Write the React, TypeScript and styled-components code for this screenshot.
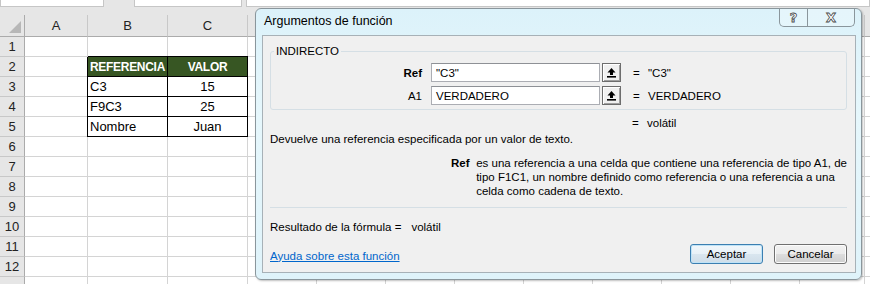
import { Fragment } from "react";
import styled, { createGlobalStyle } from "styled-components";

const GlobalStyle = createGlobalStyle`
  html, body {
    margin: 0;
    padding: 0;
    background: #ffffff;
    overflow: hidden;
  }
  * {
    box-sizing: border-box;
  }
`;

// only A..C headers show beside the dialog, the rest sit under it
const COLS = ["A", "B", "C", "", "", "", "", "", "", "", "", "", ""];
const WIDTHS = [63, 80, 80, 69, 69, 69, 69, 69, 69, 69, 69, 65, 64];

const table: Record<number, [string, string]> = {
  2: ["REFERENCIA", "VALOR"],
  3: ["C3", "15"],
  4: ["F9C3", "25"],
  5: ["Nombre", "Juan"],
};

const Screen = styled.div`
  position: relative;
  width: 870px;
  height: 284px;
  overflow: hidden;
  font-family: "Liberation Sans", Arial, sans-serif;
`;

const TopStrip = styled.div`
  height: 15px;
  background: #e6e6e6;
  display: flex;
  align-items: flex-start;
`;

const BarBox = styled.div<{ $w: number; $ml: number }>`
  width: ${({ $w }) => $w}px;
  margin-left: ${({ $ml }) => $ml}px;
  height: 7px;
  background: #ffffff;
  border: 1px solid #c6c6c6;
  border-top: none;
`;

const Grid = styled.div`
  display: grid;
  grid-template-columns: 25px ${WIDTHS.map((w) => `${w}px`).join(" ")};
  grid-template-rows: 22px repeat(13, 20px);
  font-size: 13px;
`;

const Corner = styled.div`
  background: #e6e6e6;
  border-right: 1px solid #ababab;
  border-bottom: 1px solid #ababab;
  position: relative;
  &::after {
    content: "";
    position: absolute;
    right: 3px;
    bottom: 3px;
    border-style: solid;
    border-width: 0 0 12px 12px;
    border-color: transparent transparent #b7b7b7 transparent;
  }
`;

const ColHead = styled.div`
  background: #e6e6e6;
  border-right: 1px solid #c8c8c8;
  border-bottom: 1px solid #ababab;
  display: flex;
  align-items: center;
  justify-content: center;
  color: #222;
  font-size: 13px;
`;

const RowHead = styled.div`
  background: #e6e6e6;
  border-right: 1px solid #ababab;
  border-bottom: 1px solid #c8c8c8;
  display: flex;
  align-items: center;
  justify-content: center;
  color: #222;
  font-size: 13px;
`;

const Cell = styled.div<{
  $boxed?: boolean;
  $head?: boolean;
  $center?: boolean;
  $left?: boolean;
  $top?: boolean;
}>`
  border-right: 1px solid ${({ $boxed }) => ($boxed ? "#000" : "#d4d4d4")};
  border-bottom: 1px solid ${({ $boxed }) => ($boxed ? "#000" : "#d4d4d4")};
  background: ${({ $head }) => ($head ? "#375623" : "#fff")};
  color: ${({ $head }) => ($head ? "#fff" : "#000")};
  font-weight: ${({ $head }) => ($head ? "bold" : "normal")};
  font-size: ${({ $head }) => ($head ? "12px" : "13px")};
  letter-spacing: ${({ $head }) => ($head ? "-0.3px" : "0")};
  display: flex;
  align-items: flex-end;
  padding: 0 2px 2px 2px;
  justify-content: ${({ $center }) => ($center ? "center" : "flex-start")};
  white-space: nowrap;
  overflow: hidden;
  box-shadow: ${({ $left, $top }) =>
    [$left ? "-1px 0 0 #000" : "", $top ? "0 -1px 0 #000" : ""]
      .filter(Boolean)
      .join(", ") || "none"};
`;

/* dialog window floating over the sheet */
const Dialog = styled.div`
  position: absolute;
  left: 255px;
  top: 8px;
  width: 607px;
  height: 272px;
  border: 1px solid #8a969c;
  border-radius: 6px;
  background: linear-gradient(180deg, #dcf2fa 0%, #e6f7fc 40%, #dff3fa 100%);
  box-shadow: 1px 1px 2px rgba(0, 0, 0, 0.25);
  display: flex;
  flex-direction: column;
  padding: 0 5px 6px 6px;
  font-family: "Liberation Sans", Arial, sans-serif;
`;

const TitleBar = styled.div`
  height: 26px;
  display: flex;
  align-items: flex-start;
  justify-content: space-between;
`;

const Title = styled.div`
  font-size: 12.5px;
  color: #000;
  padding: 5px 0 0 2px;
`;

const Caption = styled.div`
  display: flex;
  height: 18px;
  margin-right: 1px;
  border: 1px solid #8a969c;
  border-top: none;
  border-radius: 0 0 5px 5px;
  background: rgba(255, 255, 255, 0.25);
`;

const CapBtn = styled.div<{ $w: number; $sep?: boolean }>`
  width: ${({ $w }) => $w}px;
  display: flex;
  align-items: center;
  justify-content: center;
  border-right: ${({ $sep }) => ($sep ? "1px solid #8a969c" : "none")};
  font-family: "DejaVu Sans", sans-serif;
  font-weight: bold;
  font-size: 13px;
  color: #fff;
  -webkit-text-stroke: 0.8px #4a4a4a;
`;

const Body = styled.div`
  flex: 1;
  background: #f0f0f0;
  border: 1px solid #a7b1b7;
  padding: 8px 8px 0 7px;
  display: flex;
  flex-direction: column;
  font-size: 11.5px;
  color: #000;
`;

const Group = styled.fieldset`
  margin: 0;
  padding: 5px 0 4px 1px;
  border: 1px solid #d5dfe5;
  border-radius: 3px;
  display: flex;
  flex-direction: column;
  gap: 4px;
`;

const Legend = styled.legend`
  padding: 0 2px;
  margin-left: 2px;
  line-height: 14px;
  font-size: 11.5px;
`;

const ArgRow = styled.div<{ $indent?: number }>`
  display: grid;
  grid-template-columns: 159px 171px 19px 27px auto;
  height: 19px;
  align-items: center;
  margin-left: ${({ $indent }) => $indent ?? 0}px;
`;

const ArgLabel = styled.div<{ $bold?: boolean }>`
  text-align: right;
  margin-right: 9px;
  font-weight: ${({ $bold }) => ($bold ? "bold" : "normal")};
`;

const Field = styled.div`
  height: 19px;
  margin-right: 2px;
  background: #fff;
  border: 1px solid #abadb3;
  border-top-color: #8e9196;
  padding-left: 4px;
  display: flex;
  align-items: center;
  white-space: nowrap;
`;

const PickBtn = styled.div`
  width: 19px;
  height: 19px;
  background: #f0f0f0;
  border: 1px solid #6d6d6d;
  box-shadow: inset 1px 1px 0 #fff, inset -1px -1px 0 #a0a0a0;
  display: flex;
  align-items: center;
  justify-content: center;
`;

const Eq = styled.div`
  padding-left: 12px;
`;

const Val = styled.div`
  white-space: nowrap;
`;

const Line = styled.div<{ $mt: number }>`
  margin-top: ${({ $mt }) => $mt}px;
  line-height: 14px;
  white-space: nowrap;
`;

const ArgHelp = styled.div`
  margin-top: 10px;
  display: flex;
  line-height: 14px;
  padding-left: 181px;
`;

const HelpName = styled.div`
  font-weight: bold;
  width: 27px;
`;

const HelpText = styled.div`
  white-space: nowrap;
`;

const Separator = styled.div`
  margin-top: 9px;
  height: 1px;
  background: #d5dfe5;
`;

const ResultValue = styled.span`
  margin-left: 10px;
`;

const Footer = styled.div`
  margin-top: 10px;
  display: flex;
  align-items: center;
  justify-content: space-between;
`;

const HelpLink = styled.a`
  color: #0066cc;
  text-decoration: underline;
  padding-top: 3px;
`;

const Buttons = styled.div`
  display: flex;
  gap: 11px;
`;

const Button = styled.div<{ $default?: boolean }>`
  width: 73px;
  height: 20px;
  border-radius: 3px;
  border: 1px solid ${({ $default }) => ($default ? "#3c7fb1" : "#707070")};
  background: ${({ $default }) =>
    $default
      ? "linear-gradient(180deg, #f1f7fb 0%, #e8f1f7 50%, #d9e6ef 51%, #cfdde8 100%)"
      : "linear-gradient(180deg, #f2f2f2 0%, #ebebeb 50%, #dddddd 51%, #cfcfcf 100%)"};
  box-shadow: inset 0 0 0 1px
    ${({ $default }) => ($default ? "#bfe3f7" : "#fcfcfc")};
  display: flex;
  align-items: center;
  justify-content: center;
`;

const PickIcon = () => (
  <svg width="11" height="11" viewBox="0 0 11 11">
    <polygon points="5.5,1 1.5,5.5 9.5,5.5" fill="#000" />
    <rect x="4" y="5" width="3" height="3" fill="#000" />
    <rect x="1" y="9" width="9" height="1.6" fill="#000" />
  </svg>
);

const args = [
  { name: "Ref", bold: true, value: '"C3"', result: '"C3"' },
  { name: "A1", bold: false, value: "VERDADERO", result: "VERDADERO" },
];

const App = () => {
  const rows = Array.from({ length: 13 }, (_, i) => i + 1);

  return (
    <Screen>
      <GlobalStyle />
      <TopStrip>
        <BarBox $w={107} $ml={0} />
        <BarBox $w={110} $ml={30} />
        <BarBox $w={640} $ml={4} />
      </TopStrip>

      <Grid>
        <Corner />
        {COLS.map((c, i) => (
          <ColHead key={i}>{c}</ColHead>
        ))}
        {rows.map((r) => (
          <Fragment key={r}>
            <RowHead>{r < 13 ? r : ""}</RowHead>
            {COLS.map((_, ci) => {
              const data = table[r];
              const boxed = !!data && (ci === 1 || ci === 2);
              const text = boxed ? data[ci - 1] : "";
              return (
                <Cell
                  key={ci}
                  $boxed={boxed}
                  $head={boxed && r === 2}
                  $center={boxed && ci === 2}
                  $left={boxed && ci === 1}
                  $top={boxed && r === 2}
                >
                  {text}
                </Cell>
              );
            })}
          </Fragment>
        ))}
      </Grid>

      <Dialog>
        <TitleBar>
          <Title>Argumentos de función</Title>
          <Caption>
            <CapBtn $w={28} $sep>
              ?
            </CapBtn>
            <CapBtn $w={46}>X</CapBtn>
          </Caption>
        </TitleBar>

        <Body>
          <Group>
            <Legend>INDIRECTO</Legend>
            {args.map((a) => (
              <ArgRow key={a.name}>
                <ArgLabel $bold={a.bold}>{a.name}</ArgLabel>
                <Field>{a.value}</Field>
                <PickBtn>
                  <PickIcon />
                </PickBtn>
                <Eq>=</Eq>
                <Val>{a.result}</Val>
              </ArgRow>
            ))}
          </Group>

          <Line $mt={3}>
            <ArgRow $indent={1}>
              <span />
              <span />
              <span />
              <Eq>=</Eq>
              <Val>volátil</Val>
            </ArgRow>
          </Line>

          <Line $mt={0}>
            Devuelve una referencia especificada por un valor de texto.
          </Line>

          <ArgHelp>
            <HelpName>Ref</HelpName>
            <HelpText>
              es una referencia a una celda que contiene una referencia de tipo
              A1, de
              <br />
              tipo F1C1, un nombre definido como referencia o una referencia a
              una
              <br />
              celda como cadena de texto.
            </HelpText>
          </ArgHelp>

          <Separator />

          <Line $mt={12}>
            Resultado de la fórmula =<ResultValue>volátil</ResultValue>
          </Line>

          <Footer>
            <HelpLink>Ayuda sobre esta función</HelpLink>
            <Buttons>
              <Button $default>Aceptar</Button>
              <Button>Cancelar</Button>
            </Buttons>
          </Footer>
        </Body>
      </Dialog>
    </Screen>
  );
};

export default App;
